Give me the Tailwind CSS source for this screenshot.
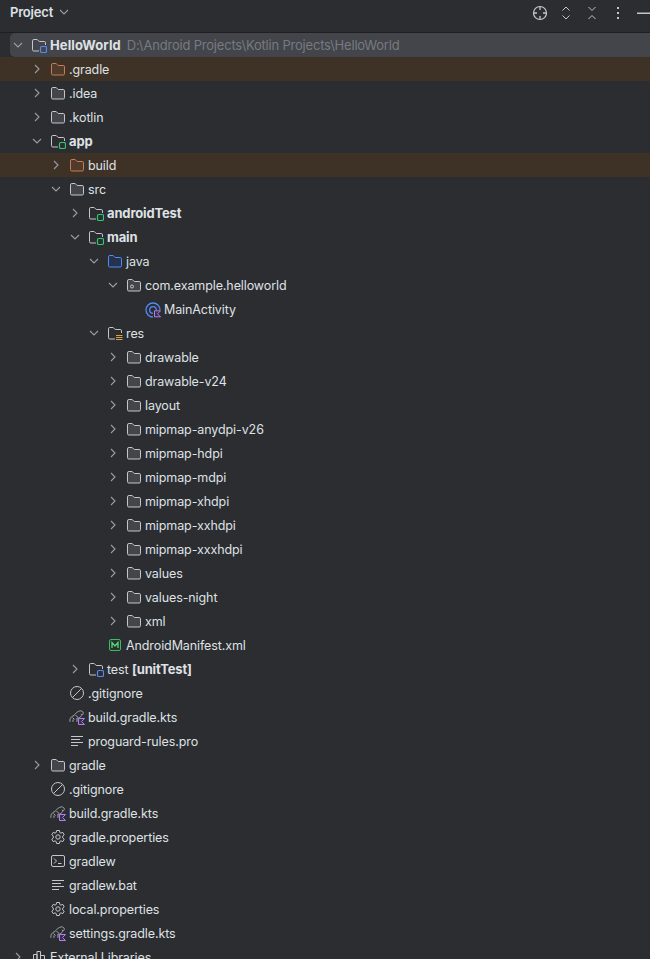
<!DOCTYPE html>
<html>
<head>
<meta charset="utf-8">
<script src="https://cdn.jsdelivr.net/npm/@tailwindcss/browser@4"></script>
</head>
<body class="bg-[#2b2d30] font-['Inter',sans-serif] text-[12.5px] tracking-[-0.1px] text-[#dfe1e5] overflow-hidden">
<svg class="hidden">
  <symbol id="right" viewBox="0 1 16 16"><path d="M6 4 10 8 6 12" fill="none" stroke="#9a9da3" stroke-width="1.100"/></symbol>
  <symbol id="down" viewBox="0 1 16 16"><path d="M4 6 8 10 12 6" fill="none" stroke="#9a9da3" stroke-width="1.100"/></symbol>
  <symbol id="folder" viewBox="0 1 16 16"><path d="M1.500 3.800A1.300 1.300 0 0 1 2.800 2.500h3.400l2 2h5a1.300 1.300 0 0 1 1.300 1.300v6.900a1.300 1.300 0 0 1-1.300 1.300H2.800a1.300 1.300 0 0 1-1.300-1.300Z" fill="#43454a" stroke="#c4c6cc"/></symbol>
  <symbol id="folder-build" viewBox="0 1 16 16"><path d="M1.500 3.800A1.300 1.300 0 0 1 2.800 2.500h3.400l2 2h5a1.300 1.300 0 0 1 1.300 1.300v6.900a1.300 1.300 0 0 1-1.300 1.300H2.800a1.300 1.300 0 0 1-1.300-1.300Z" fill="#4f3a2c" stroke="#c77d55"/></symbol>
  <symbol id="folder-java" viewBox="0 1 16 16"><path d="M1.500 3.800A1.300 1.300 0 0 1 2.800 2.500h3.400l2 2h5a1.300 1.300 0 0 1 1.300 1.300v6.900a1.300 1.300 0 0 1-1.300 1.300H2.800a1.300 1.300 0 0 1-1.300-1.300Z" fill="#25324d" stroke="#548af7"/></symbol>
  <symbol id="module-blue" viewBox="0 1 16 16"><path d="M8 14H2.800a1.300 1.300 0 0 1-1.300-1.300V3.800a1.300 1.300 0 0 1 1.300-1.300h3.400l2 2h5a1.300 1.300 0 0 1 1.300 1.300V8" fill="none" stroke="#c4c6cc"/><rect x="9.500" y="9.500" width="6" height="6" rx="1.300" fill="none" stroke="#548af7" stroke-width="1.200"/></symbol>
  <symbol id="module-green" viewBox="0 1 16 16"><path d="M8 14H2.800a1.300 1.300 0 0 1-1.300-1.300V3.800a1.300 1.300 0 0 1 1.300-1.300h3.400l2 2h5a1.300 1.300 0 0 1 1.300 1.300V8" fill="none" stroke="#c4c6cc"/><rect x="9.500" y="9.500" width="6" height="6" rx="1.300" fill="none" stroke="#2fc96f" stroke-width="1.200"/></symbol>
  <symbol id="res" viewBox="0 1 16 16"><path d="M8 14H2.800a1.300 1.300 0 0 1-1.300-1.300V3.800a1.300 1.300 0 0 1 1.300-1.300h3.400l2 2h5a1.300 1.300 0 0 1 1.300 1.300V8" fill="none" stroke="#c4c6cc"/><path d="M9 10.500h6.500M9 12.500h6.500M9 14.500h6.500" stroke="#d9a343"/></symbol>
  <symbol id="package" viewBox="0 1 16 16"><path d="M1.500 3.800A1.300 1.300 0 0 1 2.800 2.500h3.400l2 2h5a1.300 1.300 0 0 1 1.300 1.300v6.900a1.300 1.300 0 0 1-1.300 1.300H2.800a1.300 1.300 0 0 1-1.300-1.300Z" fill="#43454a" stroke="#c4c6cc"/><circle cx="6" cy="9.500" r="1.500" fill="none" stroke="#c4c6cc"/></symbol>
  <symbol id="class" viewBox="0 0 16 16"><circle cx="8" cy="8" r="7" fill="none" stroke="#548af7" stroke-width="1.300"/><circle cx="8" cy="8" r="3.300" fill="none" stroke="#548af7" stroke-width="1.300"/><rect x="8" y="8" width="8" height="8" fill="#2b2d30"/><path d="M9.500 8.800h6l-3 3 3 3h-6Z" fill="#3b2d4d" stroke="#b07ff0"/></symbol>
  <symbol id="manifest" viewBox="0 1 16 16"><rect x="2.500" y="2.500" width="11" height="11" rx="1.500" fill="#253627" stroke="#3fb868"/><path d="M5 11V5.500L8 9l3-3.500V11" fill="none" stroke="#57d47f" stroke-width="1.300"/></symbol>
  <symbol id="ignore" viewBox="0 1 16 16"><circle cx="8" cy="8" r="6.500" fill="none" stroke="#c4c6cc"/><path d="M3.500 12.500 12.500 3.500" stroke="#c4c6cc"/></symbol>
  <symbol id="gradle-kts" viewBox="0 1 16 16"><path d="M1 12.800C.3 9.500 2.500 7.200 5 6.500 6.500 4 10 1.300 12.500 2c2.200.6 2.300 3.300.5 4l-1.200-1M4 12.800V10.500M8 9v3.800M8 9c2 0 3.500-.5 4.500-2.500M3.500 8.500l2 2M6.500 6l2 2" fill="none" stroke="#a8abb2"/><path d="M9.500 9.500h6l-3 3 3 3h-6Z" fill="#3b2d4d" stroke="#b07ff0"/></symbol>
  <symbol id="gear" viewBox="0 1 16 16"><path d="M6.600 1.500h2.800l.4 2 1.100.6 1.900-.7 1.400 2.400-1.500 1.300v1.800l1.500 1.300-1.400 2.400-1.900-.7-1.100.6-.4 2H6.600l-.4-2-1.100-.6-1.900.7-1.400-2.400 1.500-1.300V7.100L1.800 5.800l1.400-2.400 1.900.7 1.100-.6Z" fill="none" stroke="#c4c6cc"/><circle cx="8" cy="8" r="2.200" fill="none" stroke="#c4c6cc"/></symbol>
  <symbol id="shell" viewBox="0 1 16 16"><rect x="1.500" y="2.500" width="13" height="11" rx="1.500" fill="none" stroke="#c4c6cc"/><path d="M4 5.500 6.500 8 4 10.500M8 10.500h3.500" fill="none" stroke="#c4c6cc"/></symbol>
  <symbol id="text" viewBox="0 1 16 16"><path d="M2 3.500h12M2 6.500h9M2 9.500h12M2 12.500h7" stroke="#c4c6cc"/></symbol>
  <symbol id="library" viewBox="0 1 16 16"><path d="M2.500 5.500H6v8H2.500ZM6 2.500h3.500v11H6ZM9.500 6.500h4v7h-4Z" fill="none" stroke="#c4c6cc"/></symbol>
</svg>

<div class="h-[959px] overflow-hidden">
  <header class="flex h-[33px] items-center justify-between border-b border-[#1e1f22] pb-[6px] pl-[10px]">
    <div class="flex items-center gap-[3px]">
      <span class="text-[13px] font-semibold tracking-[-0.2px]">Project</span>
      <svg class="size-4"><use href="#down"/></svg>
    </div>
    <div class="-mr-[2px] flex shrink-0 items-center gap-[10px]">
      <svg class="size-4" viewBox="0 0 16 16" fill="none" stroke="#c4c6cc"><circle cx="8" cy="8" r="6.500" stroke-width="1.200"/><path d="M8 1v4M8 11v4M1 8h4M11 8h4" stroke-width="1.300"/></svg>
      <svg class="size-4" viewBox="0 0 16 16" fill="none" stroke="#c4c6cc"><path d="M4.500 5.500 8 2l3.500 3.500M4.500 10.500 8 14l3.500-3.500"/></svg>
      <svg class="size-4" viewBox="0 0 16 16" fill="none" stroke="#c4c6cc"><path d="M4.500 2 8 5.500 11.500 2M4.500 14 8 10.500 11.500 14"/></svg>
      <svg class="size-4" viewBox="0 0 16 16" fill="#c4c6cc"><rect x="7" y="2" width="2" height="2"/><rect x="7" y="7" width="2" height="2"/><rect x="7" y="12" width="2" height="2"/></svg>
      <svg class="size-4" viewBox="0 0 16 16"><rect x="1" y="7.500" width="14" height="1.500" fill="#c4c6cc"/></svg>
    </div>
  </header>

  <ul>
    <li class="ml-[10px] flex h-6 items-center rounded-l-[5px] bg-[#43454a] pt-[2px]">
      <svg class="size-4"><use href="#down"/></svg>
      <svg class="ml-[5px] mr-[3px] size-4"><use href="#module-blue"/></svg>
      <span class="text-[13px] font-bold tracking-[0.1px]">HelloWorld</span>
      <span class="ml-[6px] text-[13px] tracking-[-0.2px] text-[#767a82]">D:\Android Projects\Kotlin Projects\HelloWorld</span>
    </li>
    <li class="flex h-6 items-center bg-[#3e3226] pl-[29px] pt-[2px]"><svg class="size-4"><use href="#right"/></svg><svg class="ml-[5px] mr-[3px] size-4"><use href="#folder-build"/></svg>.gradle</li>
    <li class="flex h-6 items-center pl-[29px] pt-[2px]"><svg class="size-4"><use href="#right"/></svg><svg class="ml-[5px] mr-[3px] size-4"><use href="#folder"/></svg>.idea</li>
    <li class="flex h-6 items-center pl-[29px] pt-[2px]"><svg class="size-4"><use href="#right"/></svg><svg class="ml-[5px] mr-[3px] size-4"><use href="#folder"/></svg>.kotlin</li>
    <li class="flex h-6 items-center pl-[29px] pt-[2px] text-[13px] font-bold tracking-[-0.15px]"><svg class="size-4"><use href="#down"/></svg><svg class="ml-[5px] mr-[3px] size-4"><use href="#module-green"/></svg>app</li>
    <li class="flex h-6 items-center bg-[#3e3226] pl-[48px] pt-[2px]"><svg class="size-4"><use href="#right"/></svg><svg class="ml-[5px] mr-[3px] size-4"><use href="#folder-build"/></svg>build</li>
    <li class="flex h-6 items-center pl-[48px] pt-[2px]"><svg class="size-4"><use href="#down"/></svg><svg class="ml-[5px] mr-[3px] size-4"><use href="#folder"/></svg>src</li>
    <li class="flex h-6 items-center pl-[67px] pt-[2px] text-[13px] font-bold tracking-[-0.15px]"><svg class="size-4"><use href="#right"/></svg><svg class="ml-[5px] mr-[3px] size-4"><use href="#module-green"/></svg>androidTest</li>
    <li class="flex h-6 items-center pl-[67px] pt-[2px] text-[13px] font-bold tracking-[-0.15px]"><svg class="size-4"><use href="#down"/></svg><svg class="ml-[5px] mr-[3px] size-4"><use href="#module-green"/></svg>main</li>
    <li class="flex h-6 items-center pl-[86px] pt-[2px]"><svg class="size-4"><use href="#down"/></svg><svg class="ml-[5px] mr-[3px] size-4"><use href="#folder-java"/></svg>java</li>
    <li class="flex h-6 items-center pl-[105px] pt-[2px]"><svg class="size-4"><use href="#down"/></svg><svg class="ml-[5px] mr-[3px] size-4"><use href="#package"/></svg>com.example.helloworld</li>
    <li class="flex h-6 items-center pl-[145px] pt-[2px]"><svg class="mr-[3px] size-4"><use href="#class"/></svg>MainActivity</li>
    <li class="flex h-6 items-center pl-[86px] pt-[2px]"><svg class="size-4"><use href="#down"/></svg><svg class="ml-[5px] mr-[3px] size-4"><use href="#res"/></svg>res</li>
    <li class="flex h-6 items-center pl-[105px] pt-[2px]"><svg class="size-4"><use href="#right"/></svg><svg class="ml-[5px] mr-[3px] size-4"><use href="#folder"/></svg>drawable</li>
    <li class="flex h-6 items-center pl-[105px] pt-[2px]"><svg class="size-4"><use href="#right"/></svg><svg class="ml-[5px] mr-[3px] size-4"><use href="#folder"/></svg>drawable-v24</li>
    <li class="flex h-6 items-center pl-[105px] pt-[2px]"><svg class="size-4"><use href="#right"/></svg><svg class="ml-[5px] mr-[3px] size-4"><use href="#folder"/></svg>layout</li>
    <li class="flex h-6 items-center pl-[105px] pt-[2px]"><svg class="size-4"><use href="#right"/></svg><svg class="ml-[5px] mr-[3px] size-4"><use href="#folder"/></svg>mipmap-anydpi-v26</li>
    <li class="flex h-6 items-center pl-[105px] pt-[2px]"><svg class="size-4"><use href="#right"/></svg><svg class="ml-[5px] mr-[3px] size-4"><use href="#folder"/></svg>mipmap-hdpi</li>
    <li class="flex h-6 items-center pl-[105px] pt-[2px]"><svg class="size-4"><use href="#right"/></svg><svg class="ml-[5px] mr-[3px] size-4"><use href="#folder"/></svg>mipmap-mdpi</li>
    <li class="flex h-6 items-center pl-[105px] pt-[2px]"><svg class="size-4"><use href="#right"/></svg><svg class="ml-[5px] mr-[3px] size-4"><use href="#folder"/></svg>mipmap-xhdpi</li>
    <li class="flex h-6 items-center pl-[105px] pt-[2px]"><svg class="size-4"><use href="#right"/></svg><svg class="ml-[5px] mr-[3px] size-4"><use href="#folder"/></svg>mipmap-xxhdpi</li>
    <li class="flex h-6 items-center pl-[105px] pt-[2px]"><svg class="size-4"><use href="#right"/></svg><svg class="ml-[5px] mr-[3px] size-4"><use href="#folder"/></svg>mipmap-xxxhdpi</li>
    <li class="flex h-6 items-center pl-[105px] pt-[2px]"><svg class="size-4"><use href="#right"/></svg><svg class="ml-[5px] mr-[3px] size-4"><use href="#folder"/></svg>values</li>
    <li class="flex h-6 items-center pl-[105px] pt-[2px]"><svg class="size-4"><use href="#right"/></svg><svg class="ml-[5px] mr-[3px] size-4"><use href="#folder"/></svg>values-night</li>
    <li class="flex h-6 items-center pl-[105px] pt-[2px]"><svg class="size-4"><use href="#right"/></svg><svg class="ml-[5px] mr-[3px] size-4"><use href="#folder"/></svg>xml</li>
    <li class="flex h-6 items-center pl-[107px] pt-[2px]"><svg class="mr-[3px] size-4"><use href="#manifest"/></svg>AndroidManifest.xml</li>
    <li class="flex h-6 items-center pl-[67px] pt-[2px]"><svg class="size-4"><use href="#right"/></svg><svg class="ml-[5px] mr-[3px] size-4"><use href="#module-blue"/></svg>test&nbsp;<span class="text-[13px] font-bold tracking-[-0.15px]">[unitTest]</span></li>
    <li class="flex h-6 items-center pl-[69px] pt-[2px]"><svg class="mr-[3px] size-4"><use href="#ignore"/></svg>.gitignore</li>
    <li class="flex h-6 items-center pl-[69px] pt-[2px]"><svg class="mr-[3px] size-4"><use href="#gradle-kts"/></svg>build.gradle.kts</li>
    <li class="flex h-6 items-center pl-[69px] pt-[2px]"><svg class="mr-[3px] size-4"><use href="#text"/></svg>proguard-rules.pro</li>
    <li class="flex h-6 items-center pl-[29px] pt-[2px]"><svg class="size-4"><use href="#right"/></svg><svg class="ml-[5px] mr-[3px] size-4"><use href="#folder"/></svg>gradle</li>
    <li class="flex h-6 items-center pl-[50px] pt-[2px]"><svg class="mr-[3px] size-4"><use href="#ignore"/></svg>.gitignore</li>
    <li class="flex h-6 items-center pl-[50px] pt-[2px]"><svg class="mr-[3px] size-4"><use href="#gradle-kts"/></svg>build.gradle.kts</li>
    <li class="flex h-6 items-center pl-[50px] pt-[2px]"><svg class="mr-[3px] size-4"><use href="#gear"/></svg>gradle.properties</li>
    <li class="flex h-6 items-center pl-[50px] pt-[2px]"><svg class="mr-[3px] size-4"><use href="#shell"/></svg>gradlew</li>
    <li class="flex h-6 items-center pl-[50px] pt-[2px]"><svg class="mr-[3px] size-4"><use href="#text"/></svg>gradlew.bat</li>
    <li class="flex h-6 items-center pl-[50px] pt-[2px]"><svg class="mr-[3px] size-4"><use href="#gear"/></svg>local.properties</li>
    <li class="flex h-6 items-center pl-[50px] pt-[2px]"><svg class="mr-[3px] size-4"><use href="#gradle-kts"/></svg>settings.gradle.kts</li>
    <li class="flex h-6 items-center pl-[10px] pt-[2px]"><svg class="size-4"><use href="#right"/></svg><svg class="ml-[5px] mr-[3px] size-4"><use href="#library"/></svg>External Libraries</li>
  </ul>
</div>
</body>
</html>
